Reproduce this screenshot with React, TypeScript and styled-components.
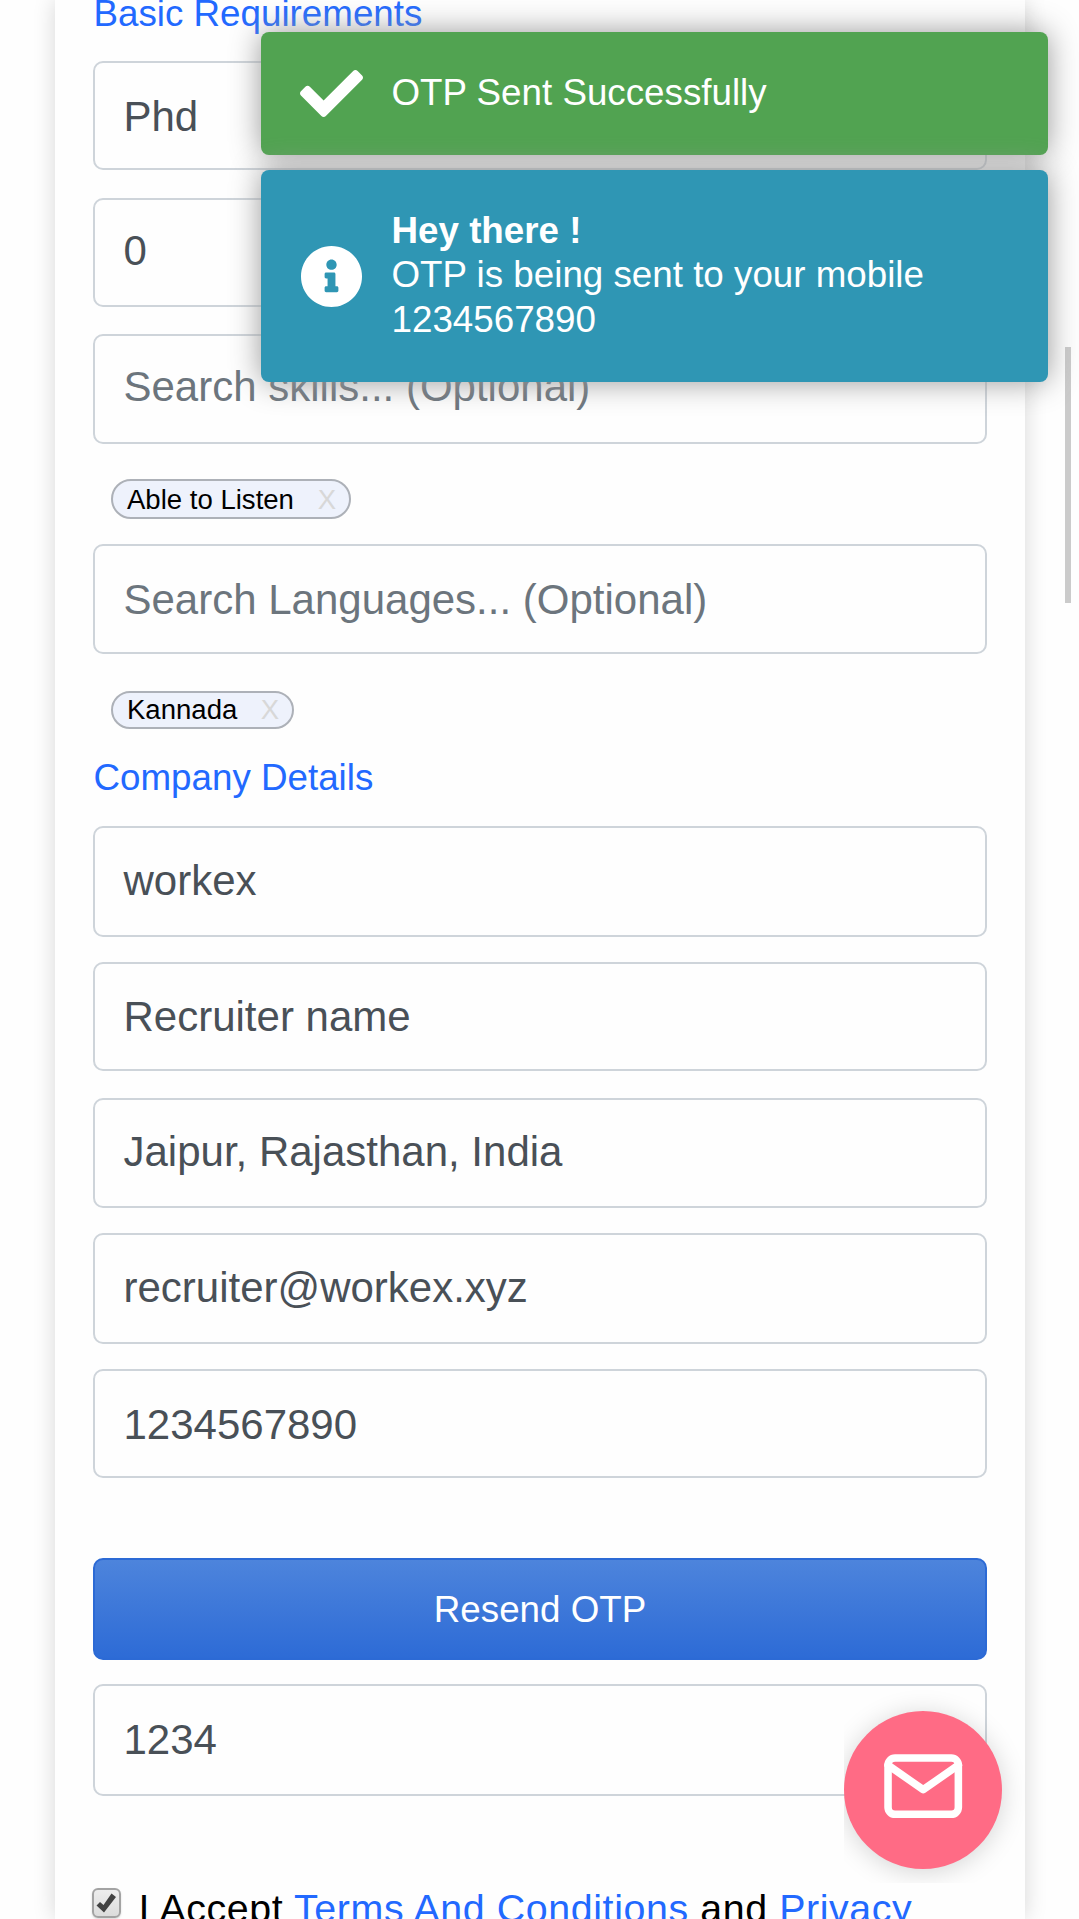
import React from "react";
import styled, { createGlobalStyle } from "styled-components";

const GlobalStyle = createGlobalStyle`
  * { box-sizing: border-box; }
  html, body { margin: 0; padding: 0; background: #fff; }
  body { font-family: "Liberation Sans", Arial, Helvetica, sans-serif; color: #000; }
`;

const Page = styled.div`
  position: relative;
  width: 1079px;
  height: 1919px;
  overflow: hidden;
  display: flex;
  padding-left: 55px;
  background: #fefefe;
`;

const Card = styled.main`
  width: 970px;
  height: 1919px;
  padding: 0 38px;
  display: flex;
  flex-direction: column;
  background: #fefefe;
  box-shadow: 0 0 21px rgba(0, 0, 0, 0.16);
`;

const Heading = styled.h2<{ $top?: number }>`
  flex: none;
  margin: ${(p) => p.$top ?? 0}px 0 0;
  padding-left: 0.5px;
  height: 44px;
  line-height: 46px;
  font-size: 36.75px;
  font-weight: 400;
  color: #2269ff;
`;

const Field = styled.div<{ $top: number; $height: number; $lift?: number; $drop?: number; $placeholder?: boolean }>`
  flex: none;
  display: flex;
  align-items: center;
  margin-top: ${(p) => p.$top}px;
  height: ${(p) => p.$height}px;
  padding: ${(p) => p.$drop ?? 0}px 30px ${(p) => p.$lift ?? 0}px 28.5px;
  border: 2px solid #ced4da;
  border-radius: 10px;
  font-size: 42px;
  line-height: 48px;
  white-space: nowrap;
  color: ${(p) => (p.$placeholder ? "#6c757d" : "#495057")};
`;

const Chip = styled.div<{ $top: number; $height: number; $width: number; $drop: number }>`
  flex: none;
  display: flex;
  align-items: center;
  justify-content: space-between;
  margin: ${(p) => p.$top}px 0 0 18px;
  width: ${(p) => p.$width}px;
  height: ${(p) => p.$height}px;
  padding: ${(p) => p.$drop}px 13px 0 14px;
  border: 2px solid #adb1b8;
  border-radius: 20px;
  background: #eef2fc;
  font-size: 27.56px;
  line-height: 32px;
  white-space: nowrap;
`;

const ChipClose = styled.span`
  color: #d8d8d8;
`;

const SubmitButton = styled.button`
  flex: none;
  margin: 80px 0 0;
  height: 102px;
  padding: 1px 0 0;
  border: 2px solid #2c6ad5;
  border-radius: 10px;
  background: linear-gradient(180deg, #4d84dc, #2d6bd6);
  color: #fff;
  font: 36.75px "Liberation Sans", Arial, sans-serif;
`;

const TermsRow = styled.div`
  flex: none;
  display: flex;
  align-items: flex-start;
  margin-top: 92px;
  white-space: nowrap;
`;

const CheckBox = styled.span`
  flex: none;
  display: flex;
  align-items: center;
  justify-content: center;
  width: 29px;
  height: 30px;
  margin-left: -1px;
  border: 2px solid #a3a3a3;
  border-radius: 6px;
  background: linear-gradient(180deg, #ededed, #dcdcdc);
  box-shadow: 0 1px 2px rgba(0, 0, 0, 0.15);
`;

const TermsText = styled.span`
  margin-left: 17.5px;
  line-height: 40px;
  font-size: 39.375px;
  letter-spacing: 0.59px;
`;

const TermsLink = styled.a`
  color: #2269ff;
`;

const ToastStack = styled.aside`
  position: absolute;
  top: 32px;
  left: 261px;
  width: 787px;
  display: flex;
  flex-direction: column;
  gap: 15px;
`;

const Toast = styled.div<{ $color: string; $height: number }>`
  display: flex;
  align-items: center;
  height: ${(p) => p.$height}px;
  padding: 0 39px;
  border-radius: 8px;
  background: ${(p) => p.$color};
  box-shadow: 0 0 31px #999;
  color: #fff;
  font-size: 36.75px;
  line-height: 44.1px;
`;

const ToastBody = styled.div`
  margin-left: 28.5px;
  padding-bottom: 1px;
`;

const ToastTitle = styled.div`
  font-weight: 700;
`;

const ScrollThumb = styled.div`
  position: absolute;
  left: 1065px;
  top: 347px;
  width: 6px;
  height: 256px;
  background: rgba(0, 0, 0, 0.2);
`;

const ChatFrame = styled.div`
  position: absolute;
  left: 844px;
  top: 1680px;
  width: 190px;
  height: 203px;
  padding-top: 31px;
  overflow: hidden;
`;

const ChatButton = styled.div`
  width: 158px;
  height: 158px;
  display: flex;
  justify-content: center;
  padding-top: 32.5px;
  border-radius: 50%;
  background: #ff6b85;
  box-shadow: 0 3px 26px rgba(0, 0, 0, 0.17);
`;

const CheckIcon = () => (
  <svg width="63" height="63" viewBox="0 0 512 512" fill="#fff">
    <path d="M173.898 439.404l-166.4-166.4c-9.997-9.997-9.997-26.206 0-36.204l36.203-36.204c9.997-9.998 26.207-9.998 36.204 0L192 312.69 432.095 72.596c9.997-9.997 26.207-9.997 36.204 0l36.203 36.204c9.997 9.997 9.997 26.206 0 36.204l-294.4 294.401c-9.998 9.997-26.207 9.997-36.204-.001z" />
  </svg>
);

const InfoIcon = () => (
  <svg width="63" height="63" viewBox="0 0 512 512" fill="#fff">
    <path d="M256 8C119.043 8 8 119.083 8 256c0 136.997 111.043 248 248 248s248-111.003 248-248C504 119.083 392.957 8 256 8zm0 110c23.196 0 42 18.804 42 42s-18.804 42-42 42-42-18.804-42-42 18.804-42 42-42zm56 254c0 6.627-5.373 12-12 12h-88c-6.627 0-12-5.373-12-12v-24c0-6.627 5.373-12 12-12h12v-64h-12c-6.627 0-12-5.373-12-12v-24c0-6.627 5.373-12 12-12h64c6.627 0 12 5.373 12 12v100h12c6.627 0 12 5.373 12 12v24z" />
  </svg>
);

const MailIcon = () => (
  <svg width="84.4" height="84.4" viewBox="0 0 24 24" fill="none" stroke="#fff" strokeWidth="2.15" strokeLinecap="round" strokeLinejoin="round">
    <path d="M4 4h16c1.1 0 2 .9 2 2v12c0 1.1-.9 2-2 2H4c-1.1 0-2-.9-2-2V6c0-1.1.9-2 2-2z" />
    <polyline points="22,6 12,13 2,6" />
  </svg>
);

const TickIcon = () => (
  <svg width="21" height="20" viewBox="0 0 21 20">
    <path d="M0.5 12.5 L4 9 L7.5 12 L15.5 0.5 L20 4 L8 19.5 Z" fill="#424242" />
  </svg>
);

export default function App() {
  return (
    <>
      <GlobalStyle />
      <Page>
        <Card>
          <Heading $top={-9}>Basic Requirements</Heading>
          <Field $top={26} $height={109} $drop={2}>Phd</Field>
          <Field $top={28} $height={109} $lift={3}>0</Field>
          <Field $top={27} $height={110} $lift={4} $placeholder>Search skills... (Optional)</Field>
          <Chip $top={35} $height={40} $width={240} $drop={1}>
            <span>Able to Listen</span>
            <ChipClose>X</ChipClose>
          </Chip>
          <Field $top={25} $height={110} $drop={1} $placeholder>Search Languages... (Optional)</Field>
          <Chip $top={37} $height={38} $width={183} $drop={0}>
            <span>Kannada</span>
            <ChipClose>X</ChipClose>
          </Chip>
          <Heading $top={26}>Company Details</Heading>
          <Field $top={27} $height={111} $lift={2}>workex</Field>
          <Field $top={25} $height={109}>Recruiter name</Field>
          <Field $top={27} $height={110} $lift={3}>Jaipur, Rajasthan, India</Field>
          <Field $top={25} $height={111} $lift={1}>recruiter@workex.xyz</Field>
          <Field $top={25} $height={109} $drop={2}>1234567890</Field>
          <SubmitButton>Resend OTP</SubmitButton>
          <Field $top={24} $height={112}>1234</Field>
          <TermsRow>
            <CheckBox><TickIcon /></CheckBox>
            <TermsText>
              I Accept <TermsLink>Terms And Conditions</TermsLink> and <TermsLink>Privacy</TermsLink>
            </TermsText>
          </TermsRow>
        </Card>
        <ScrollThumb />
        <ChatFrame>
          <ChatButton><MailIcon /></ChatButton>
        </ChatFrame>
        <ToastStack>
          <Toast $color="#51a351" $height={123}>
            <CheckIcon />
            <ToastBody>OTP Sent Successfully</ToastBody>
          </Toast>
          <Toast $color="#2f96b4" $height={212}>
            <InfoIcon />
            <ToastBody>
              <ToastTitle>Hey there !</ToastTitle>
              <div>OTP is being sent to your mobile</div>
              <div>1234567890</div>
            </ToastBody>
          </Toast>
        </ToastStack>
      </Page>
    </>
  );
}
